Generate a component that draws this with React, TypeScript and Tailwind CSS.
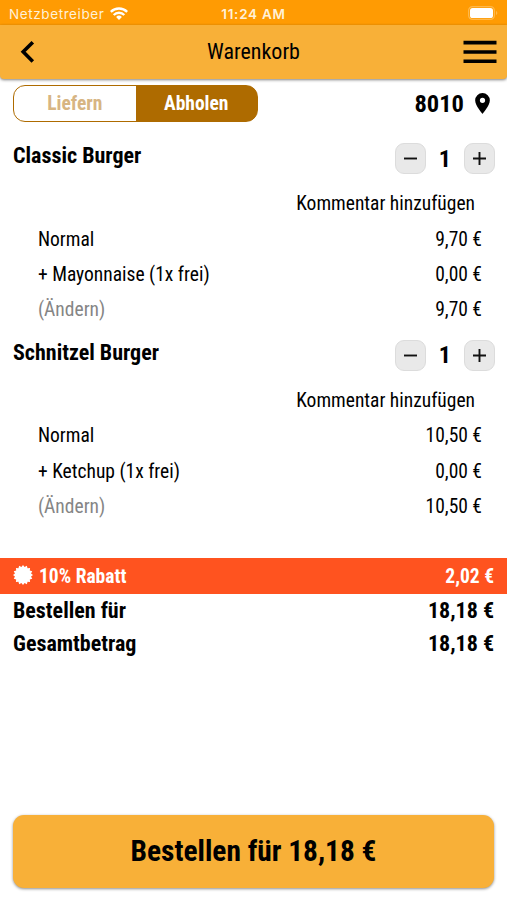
import type { ReactNode } from "react";

const FONT = "font-['Roboto_Condensed','Roboto',sans-serif] [font-stretch:75%]";

type Line = { label: string; price: string; muted?: boolean };
type Item = { name: string; lines: Line[] };

const items: Item[] = [
  {
    name: "Classic Burger",
    lines: [
      { label: "Normal", price: "9,70 €" },
      { label: "+ Mayonnaise (1x frei)", price: "0,00 €" },
      { label: "(Ändern)", price: "9,70 €", muted: true },
    ],
  },
  {
    name: "Schnitzel Burger",
    lines: [
      { label: "Normal", price: "10,50 €" },
      { label: "+ Ketchup (1x frei)", price: "0,00 €" },
      { label: "(Ändern)", price: "10,50 €", muted: true },
    ],
  },
];

function StatusBar() {
  return (
    <div className="grid h-[25px] grid-cols-3 items-center bg-[#ff9b03] px-[9px] pt-[4px] font-['Inter',sans-serif] text-[13.5px] text-[#fff1d8]">
      <div className="flex items-center gap-[6px]">
        <span className="tracking-[0.6px]">Netzbetreiber</span>
        <svg className="-mt-[3px]" width="18" height="13" viewBox="0 0 18 13" fill="none" stroke="#fff" strokeWidth="2.4">
          <path d="M0.8 4.9a11.5 11.5 0 0 1 16.4 0" />
          <path d="M3.7 8a7.5 7.5 0 0 1 10.6 0" />
          <path d="M6.1 10a4.1 4.1 0 0 1 5.8 0L9 13z" fill="#fff" stroke="none" />
        </svg>
      </div>
      <span className="text-center font-semibold tracking-[0.75px]">11:24 AM</span>
      <div className="flex justify-end">
        <svg className="-mt-[3px]" width="30" height="14" viewBox="0 0 30 14">
          <rect x="0.6" y="0.6" width="25.8" height="12.8" rx="4" fill="none" stroke="#ffb84a" strokeWidth="1.2" />
          <rect x="2" y="2" width="23" height="10" rx="2.6" fill="#fff" />
          <path d="M28 5c1.8.8 1.8 3.2 0 4z" fill="#ffb84a" />
        </svg>
      </div>
    </div>
  );
}

function Header() {
  return (
    <header className="flex h-[54px] items-center justify-between rounded-b-[4px] bg-[#f8b038] pr-[10px] pl-[20px] shadow-[0_1px_3px_rgba(0,0,0,0.5)]">
      <svg className="mr-[-10px]" width="34" height="24" viewBox="0 0 34 24" fill="none" stroke="#000" strokeWidth="3.6">
        <path d="M12.8 2.2 3.2 11.8l9.6 9.6" />
      </svg>
      <h1 className="text-[22px]">Warenkorb</h1>
      <svg width="34" height="24" viewBox="0 0 34 24" fill="#000">
        <path d="M0.5 0.8h33v3.6h-33zM0.5 10.2h33v3.6h-33zM0.5 19.4h33v3.6h-33z" />
      </svg>
    </header>
  );
}

function StepButton({ children }: { children: ReactNode }) {
  return (
    <button className="flex size-[31px] items-center justify-center rounded-[9px] border border-[#dcdcdc] bg-[#e9e9e9]">
      <svg width="15" height="15" viewBox="0 0 15 15" stroke="#111" strokeWidth="1.9">
        {children}
      </svg>
    </button>
  );
}

function CartItem({ item }: { item: Item }) {
  return (
    <section className="h-[196.7px]">
      <div className="flex h-[55.1px] items-center justify-between pt-[1px] pr-[12.5px] pl-[13px]">
        <h2 className="mb-[5px] text-[22px] font-bold">{item.name}</h2>
        <div className="flex items-center">
          <StepButton>
            <path d="M1 7.5h13" />
          </StepButton>
          <span className="w-[37.5px] text-center text-[24px] font-bold">1</span>
          <StepButton>
            <path d="M1 7.5h13M7.5 1v13" />
          </StepButton>
        </div>
      </div>
      <div className="flex h-[35.4px] items-center justify-end pt-[1.2px] pr-[32px]">
        <span>Kommentar hinzufügen</span>
      </div>
      {item.lines.map((line) => (
        <div key={line.label} className="flex h-[35.4px] items-center justify-between pt-[1.2px] pr-[25px] pl-[38px]">
          <span className={line.muted ? "text-[#858585]" : ""}>{line.label}</span>
          <span>{line.price}</span>
        </div>
      ))}
    </section>
  );
}

function Badge() {
  const points = Array.from({ length: 32 }, (_, i) => {
    const r = i % 2 === 0 ? 10 : 8.2;
    const a = (i * Math.PI) / 16;
    return `${10 + r * Math.cos(a)},${10 + r * Math.sin(a)}`;
  }).join(" ");
  return (
    <svg className="-mt-[3px]" width="20" height="20" viewBox="0 0 20 20" fill="#fff">
      <polygon points={points} />
    </svg>
  );
}

export default function App() {
  return (
    <main className={`${FONT} flex h-[900px] w-[507px] flex-col overflow-hidden bg-white text-[19.5px] leading-none text-black`}>
      <StatusBar />
      <Header />
      <div className="flex h-[51.5px] items-start justify-between pt-[6px] pr-[17px] pl-[13px]">
        <div className="flex h-[37px] w-[245px] overflow-hidden rounded-[12px] border border-[#ae6b00] bg-[linear-gradient(90deg,#fff_50%,#ae6b00_50%)] pt-[0.5px] font-bold">
          <span className="flex w-1/2 items-center justify-center text-[#d7b583]">Liefern</span>
          <span className="flex w-1/2 items-center justify-center text-white">Abholen</span>
        </div>
        <div className="flex h-[37px] items-center gap-[11px] pt-px text-[24.5px] font-bold">
          <span>8010</span>
          <svg className="-mt-[2px]" width="15" height="21" viewBox="0 0 14 20" fill="#000">
            <path fillRule="evenodd" d="M7 0a7 7 0 0 0-7 7c0 5.2 7 13 7 13s7-7.8 7-13a7 7 0 0 0-7-7zm0 9.5a2.5 2.5 0 1 1 0-5 2.5 2.5 0 0 1 0 5z" />
          </svg>
        </div>
      </div>
      {items.map((item) => (
        <CartItem key={item.name} item={item} />
      ))}
      <div className="mt-[34px] flex h-[36.5px] shrink-0 items-center justify-between bg-[#ff531f] px-[13px] pt-[1.2px] font-bold text-white">
        <div className="flex items-center gap-[6px]">
          <Badge />
          <span>10% Rabatt</span>
        </div>
        <span>2,02 €</span>
      </div>
      <div className="flex h-[33px] items-center justify-between px-[13px] text-[22px] font-bold">
        <span>Bestellen für</span>
        <span>18,18 €</span>
      </div>
      <div className="flex h-[33px] items-center justify-between px-[13px] text-[22px] font-bold">
        <span>Gesamtbetrag</span>
        <span>18,18 €</span>
      </div>
      <button className="mx-[13px] mt-auto mb-[12px] h-[73px] rounded-[11px] bg-[#f8b038] text-[29.4px] font-bold shadow-[0_1px_3px_rgba(0,0,0,0.45)]">
        Bestellen für 18,18 €
      </button>
    </main>
  );
}
